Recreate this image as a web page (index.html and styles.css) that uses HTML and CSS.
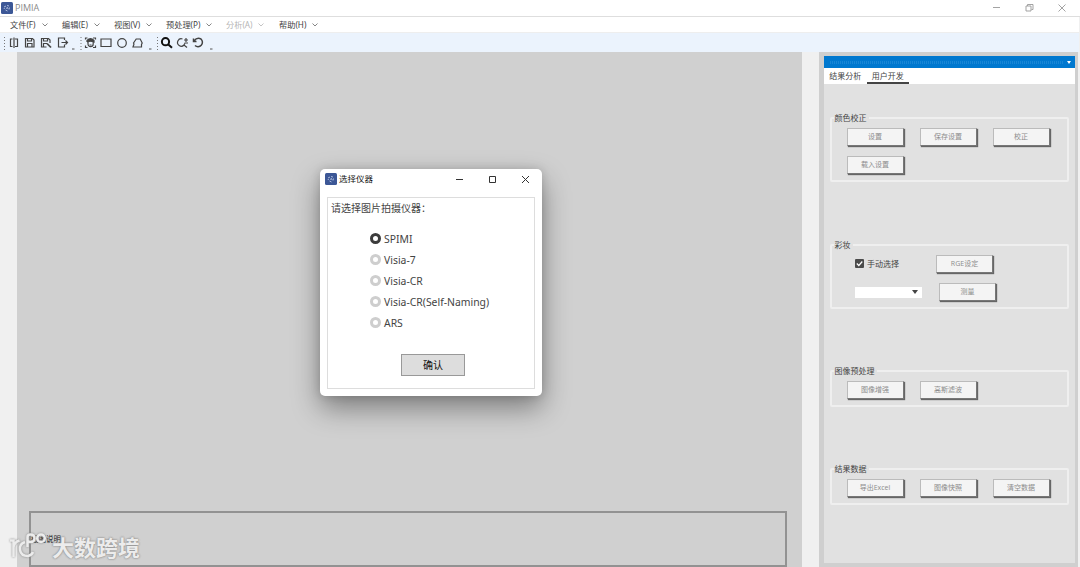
FILE: index.html
```
<!DOCTYPE html>
<html lang="zh-CN">

<head>
    <meta charset="UTF-8">
    <title>PIMIA</title>
    <link rel="stylesheet" href="styles.css">
</head>

<body>
    <header class="titlebar">
        <svg class="app-icon" viewBox="0 0 12 12">
            <rect width="12" height="12" rx="1.5" fill="#3c5796" />
            <path d="M3 5l2-1M6 3.5l2 .5M8.5 5.5l-.5 2M6.5 9l-2-1M3.5 7l-.5-1M5 6.5l1.5-1 .5 1.5" stroke="#c6d2ec" stroke-width=".8" fill="none" />
        </svg>
        <span class="app-name">PIMIA</span>
        <svg class="window-buttons" viewBox="0 0 80 12">
            <path d="M3 5.5h7M36 4h5v5h-5zM37.5 4V2.5H43V7.5h-1.5M68.5 2.5l7 7M75.5 2.5l-7 7" />
        </svg>
    </header>

    <nav class="menubar">
        <div class="menu">文件(F)<svg viewBox="0 0 6 4"><path d="M.5 .5L3 3 5.5 .5" /></svg></div>
        <div class="menu">编辑(E)<svg viewBox="0 0 6 4"><path d="M.5 .5L3 3 5.5 .5" /></svg></div>
        <div class="menu">视图(V)<svg viewBox="0 0 6 4"><path d="M.5 .5L3 3 5.5 .5" /></svg></div>
        <div class="menu menu-wide">预处理(P)<svg viewBox="0 0 6 4"><path d="M.5 .5L3 3 5.5 .5" /></svg></div>
        <div class="menu disabled">分析(A)<svg viewBox="0 0 6 4"><path d="M.5 .5L3 3 5.5 .5" /></svg></div>
        <div class="menu">帮助(H)<svg viewBox="0 0 6 4"><path d="M.5 .5L3 3 5.5 .5" /></svg></div>
    </nav>

    <div class="toolbar">
        <svg viewBox="0 1 216 20">
            <!-- grips and overflow marks -->
            <path class="grip" d="M4.5 5v13M81 5v13M157.500 5v13" />
            <path class="more" d="M72 17h2.500M149 17h2.500M210 17h2.500" />
            <!-- open, save, save as, exit -->
            <path d="M14 5.500v10.500M12.500 7h-2v7.500h2M15 7h2.500v7.500H15" />
            <path d="M25.500 6.500h7L34 8v7h-8.500zM27.500 6.500V9h4V6.500M27.500 15v-3.500h4.500V15" />
            <path d="M46.500 15h-5V6.500h7L50 8v3M43.500 6.500V9h4V6.500M43.500 15v-3.500h3.500" />
            <path d="M47 11.500l4 4" stroke-width="1.700" />
            <path d="M64.500 8V6H58.500v9h6v-2.500M61.500 10.500h6M65.500 8.500l2 2-2 2" />
            <!-- face and shapes -->
            <path d="M85.500 7.500V6h2M93 6h2.500v1.500M95.500 13.500v2H93M87.500 15.500h-2v-2" />
            <path d="M88 10v2a2.600 2.600 0 0 0 5.200 0v-2" />
            <path d="M87 10V8.500q3.500-3.500 7 0V10q-3.500-1.500-7 0M89.500 13h2" fill="#444" />
            <path d="M101 7h10v7.500h-10z" />
            <circle cx="122" cy="11" r="4.300" />
            <path d="M133 15h8.500v-2.500l.7-1.500-2-4h-4l-2.700 4 .5 1z" />
            <!-- zoom and reset -->
            <circle class="black" cx="165.500" cy="9.700" r="3.600" />
            <path class="black" d="M168.300 12.500l3.700 3.300" />
            <path d="M182.500 7a3.700 3.700 0 1 0 1.500 6l3 2.500M184 13l.8-1.500M186 6v4M184 8h4M184.500 11h3.500" />
            <path d="M193.500 6.500v3h3M194 9q3-4 7-2a4.200 4.200 0 1 1-6 6.500" stroke-width="1.500" />
        </svg>
    </div>

    <main class="workspace">
        <section class="canvas">
            <div class="caption">截图说明</div>
        </section>

        <aside class="panel">
            <div class="panel-header"><span class="texture"></span><span class="arrow"></span></div>
            <div class="tabs">
                <div class="tab">结果分析</div>
                <div class="tab active">用户开发</div>
            </div>
            <div class="panel-body">
                <fieldset class="group color-group">
                    <legend>颜色校正</legend>
                    <div class="buttons">
                        <button>设置</button>
                        <button>保存设置</button>
                        <button>校正</button>
                        <button>载入设置</button>
                    </div>
                </fieldset>
                <fieldset class="group makeup-group">
                    <legend>彩妆</legend>
                    <div class="makeup-row">
                        <label class="check"><svg viewBox="0 0 9 9"><rect width="9" height="9" rx="1" fill="#4a4a4a" /><path d="M1.800 4.500l2 2L7.300 2.500" stroke="#fff" stroke-width="1.200" fill="none" /></svg>手动选择</label>
                        <button>RGE设定</button>
                    </div>
                    <div class="makeup-row">
                        <div class="select"><span class="arrow"></span></div>
                        <button>测量</button>
                    </div>
                </fieldset>
                <fieldset class="group image-group">
                    <legend>图像预处理</legend>
                    <div class="buttons">
                        <button>图像增强</button>
                        <button>高斯滤波</button>
                    </div>
                </fieldset>
                <fieldset class="group result-group">
                    <legend>结果数据</legend>
                    <div class="buttons">
                        <button>导出Excel</button>
                        <button>图像快照</button>
                        <button>清空数据</button>
                    </div>
                </fieldset>
            </div>
        </aside>
    </main>

    <div class="dialog">
        <div class="dialog-title">
            <svg class="app-icon" viewBox="0 0 12 12">
                <rect width="12" height="12" rx="1.5" fill="#3c5796" />
                <path d="M3 5l2-1M6 3.5l2 .5M8.5 5.5l-.5 2M6.5 9l-2-1M3.5 7l-.5-1M5 6.5l1.5-1 .5 1.5" stroke="#c6d2ec" stroke-width=".8" fill="none" />
            </svg>
            <span>选择仪器</span>
            <svg class="dialog-buttons" viewBox="0 0 76 12">
                <path d="M1 6.500h7M34.500 3.500h6v6h-6zM67 3l7 7M74 3l-7 7" />
            </svg>
        </div>
        <div class="dialog-body">
            <p>请选择图片拍摄仪器：</p>
            <div class="options">
                <div class="option selected"><i></i>SPIMI</div>
                <div class="option"><i></i>Visia-7</div>
                <div class="option"><i></i>Visia-CR</div>
                <div class="option"><i></i>Visia-CR(Self-Naming)</div>
                <div class="option"><i></i>ARS</div>
            </div>
            <button class="confirm">确认</button>
        </div>
    </div>

    <div class="watermark">
        <svg viewBox="0 0 40 28">
            <path d="M2 8.500h3.500V25M5.500 15q1-5 6-6.500M17 10q-6 2-5 8t8 6q4-1 5-4" />
            <path d="M19.500 15V5q0-2.500 3-2.500 4 0 4 3.700t-4 3.800q-1.500 0-3-1" />
            <circle cx="33" cy="6.300" r="3.800" />
        </svg>
        <span>大数跨境</span>
    </div>
</body>

</html>
```
FILE: styles.css
```
* {
    box-sizing: border-box;
}

body {
    margin: 0;
    height: 567px;
    overflow: hidden;
    position: relative;
    display: flex;
    flex-direction: column;
    background: #f0f0f0;
    font-family: "Open Sans", "Noto Sans CJK SC", sans-serif;
    font-size: 8px;
    color: #444;
}

.titlebar {
    height: 17px;
    display: flex;
    align-items: center;
    background: #fff;
    border-bottom: 1px solid #dedede;
    padding: 0 10px 0 1px;
}

.app-icon {
    width: 12px;
    height: 12px;
}

.app-name {
    margin-left: 2px;
    font-size: 9px;
    line-height: 14px;
    color: #8a8a8a;
}

.window-buttons {
    width: 80px;
    height: 12px;
    margin-left: auto;
    fill: none;
    stroke: #999;
    stroke-width: 0.9;
}

/* Menu */
.menubar {
    height: 16px;
    display: flex;
    align-items: center;
    gap: 14px;
    padding-left: 10px;
    background: #fff;
    border-bottom: 1px solid #eee;
    margin-right: 1px;
}

.menu {
    width: 38px;
    display: flex;
    align-items: center;
    justify-content: space-between;
    font-family: "Noto Sans", "Noto Sans CJK SC", sans-serif;
    font-size: 8.2px;
    line-height: 12px;
    white-space: nowrap;
}

.menu-wide {
    width: 46px;
}

.menu:last-child {
    margin-left: 1px;
    width: 39px;
}

.menu svg {
    width: 6px;
    height: 4px;
    fill: none;
    stroke: #666;
    stroke-width: 0.8;
}

.disabled {
    color: #b5b5b5;
}

.menu.disabled svg {
    stroke: #b5b5b5;
}

.toolbar {
    height: 19px;
    background: #ebf3fd;
    margin-right: 1px;
}

.toolbar svg {
    display: block;
    width: 216px;
    height: 20px;
    fill: none;
    stroke: #444;
    stroke-width: 1.2;
}

.toolbar .grip {
    stroke: #777;
    stroke-width: 1;
    stroke-dasharray: 1 2;
}

.toolbar .more {
    stroke: #555;
    stroke-width: 1;
}

.toolbar .black {
    stroke: #111;
    stroke-width: 2;
}

/* Main area */
.workspace {
    flex: 1;
    display: flex;
    padding: 0 2px 0 17px;
}

.canvas {
    width: 785px;
    display: flex;
    align-items: flex-end;
    background: #d0d0d0;
    padding: 0 15px 0 12px;
}

.caption {
    width: 758px;
    height: 56px;
    border: 2px solid #929292;
    font-size: 7.5px;
    line-height: 53px;
    color: #222;
}

.panel {
    width: 259px;
    margin-left: 17px;
    padding: 4px 3px 4px 5px;
    background: #cfcfcf;
    display: flex;
    flex-direction: column;
}

.panel-header {
    height: 12px;
    display: flex;
    align-items: center;
    justify-content: space-between;
    background: #0078cf;
    padding: 0 4px 0 6px;
}

.texture {
    width: 234px;
    height: 3px;
    background: repeating-linear-gradient(90deg, #2a90da 0 1px, #0078cf 1px 2px);
    opacity: 0.6;
}

.arrow {
    border: 2.5px solid transparent;
    border-top: 3px solid #fff;
    border-bottom: 0;
}

.tabs {
    height: 16px;
    display: flex;
    background: #fff;
}

.tab {
    width: 42.5px;
    line-height: 15px;
    text-align: center;
}

.active {
    border-bottom: 2px solid #444;
}

.panel-body {
    flex: 1;
    padding: 28px 6px 0;
    background: #e1e1e1;
}

.group {
    margin: 0;
    padding: 4px 0 0 14.5px;
    border: 2px solid #efefef;
    border-radius: 2px;
}

legend {
    height: 12px;
    line-height: 12px;
    margin-left: -13px;
    padding: 0 2px 0 1px;
}

.color-group {
    height: 70px;
}

.makeup-group {
    height: 70px;
    margin-top: 57px;
}

.image-group {
    height: 42px;
    margin-top: 56px;
}

.result-group {
    height: 42px;
    margin-top: 56px;
}

.buttons {
    display: grid;
    grid-template-columns: repeat(3, 58px);
    gap: 10px 15px;
}

.group button {
    width: 57px;
    height: 18px;
    padding: 0;
    border: 1px solid #bbb;
    border-right-color: #777;
    border-bottom-color: #777;
    background: #f4f4f4;
    box-shadow: 1px 1px 1px #666;
    font: 7px/14px "Open Sans", "Noto Sans CJK SC", sans-serif;
    color: #8c8c8c;
}

.makeup-row {
    display: flex;
    align-items: center;
    height: 18px;
    padding-left: 8.5px;
}

.makeup-row + .makeup-row {
    margin-top: 10px;
}

.check {
    width: 81px;
    height: 12px;
    margin-bottom: 1px;
    line-height: 12px;
    display: flex;
    align-items: center;
    gap: 3px;
}

.check svg {
    width: 9px;
    height: 9px;
}

.select {
    width: 67px;
    height: 11px;
    margin-right: 17px;
    padding-right: 4px;
    display: flex;
    align-items: center;
    justify-content: flex-end;
    background: #fff;
}

.select .arrow {
    border-width: 4px 3px 0;
    border-top-color: #444;
}

/* Instrument dialog */
.dialog {
    position: absolute;
    left: 320px;
    top: 169px;
    width: 222px;
    height: 227px;
    padding: 0 7px 7px;
    display: flex;
    flex-direction: column;
    background: #fff;
    border-radius: 5px;
    box-shadow: 0 12px 28px rgba(0, 0, 0, 0.4), 0 0 10px rgba(0, 0, 0, 0.15);
}

.dialog-title {
    height: 28px;
    padding-bottom: 8px;
    margin: 0 -2px;
    display: flex;
    align-items: center;
    gap: 2px;
    font-size: 8.5px;
    line-height: 12px;
    color: #111;
}

.dialog-buttons {
    width: 76px;
    height: 12px;
    margin-left: auto;
    margin-right: 6px;
    fill: none;
    stroke: #333;
    stroke-width: 1;
}

.dialog-body {
    flex: 1;
    border: 1px solid #ddd;
    padding: 2px 3px 3px;
    display: flex;
    flex-direction: column;
}

.dialog-body p {
    margin: 0;
    font-size: 10px;
    line-height: 16px;
}

.options {
    margin: 12px 0 0 38.5px;
}

.option {
    height: 21.1px;
    display: flex;
    align-items: center;
    gap: 3.5px;
    font-family: "Noto Sans", sans-serif;
    font-size: 10.4px;
    line-height: 14px;
}

.option i {
    width: 11px;
    height: 11px;
    border: 3px solid #cecece;
    border-radius: 50%;
}

.selected i {
    border-color: #3c3c3c;
}

.confirm {
    width: 64px;
    height: 22px;
    margin: 21px 0 0 70px;
    padding: 0 0 1px;
    border: 1px solid #999;
    background: #ddd;
    font: 10px "Noto Sans CJK SC", sans-serif;
    color: #111;
}

/* Watermark over the canvas */
.watermark {
    position: absolute;
    left: 8px;
    top: 529px;
    display: flex;
    align-items: center;
    gap: 4px;
    color: #ececec;
    font: 700 22px/34px "Noto Sans CJK SC", sans-serif;
    text-shadow: 0 0 2px #888, 0 0 2px #999;
}

.watermark svg {
    width: 40px;
    height: 28px;
    fill: none;
    stroke: #ececec;
    stroke-width: 2.5;
    filter: drop-shadow(0 0 1px #888);
}
```
